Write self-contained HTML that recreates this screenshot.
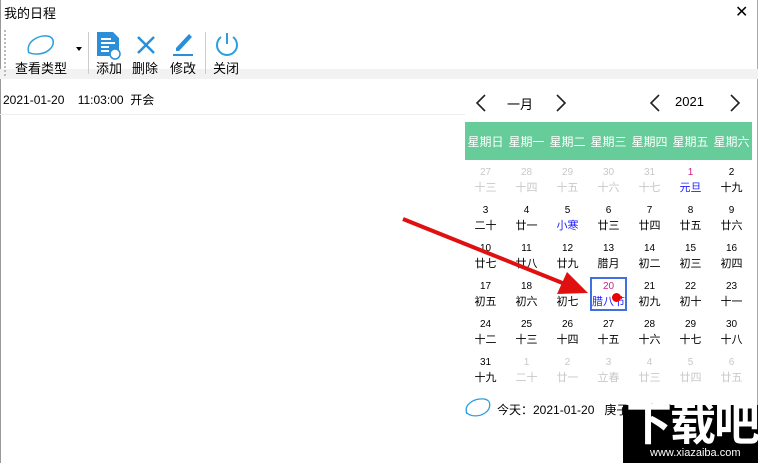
<!DOCTYPE html><html><head><meta charset="utf-8"><style>
*{margin:0;padding:0;box-sizing:border-box}
body{width:758px;height:463px;overflow:hidden;background:#fff;font-family:"Liberation Sans","Noto Sans CJK SC",sans-serif;position:relative;color:#000}
.a{position:absolute;white-space:nowrap}
.tb{font-size:13px}
.c{position:absolute;width:41px;text-align:center;font-size:10px;line-height:12px}
.c .l{font-size:11px;line-height:14px;margin-top:2px}
</style></head><body>
<div class="a" style="left:0;top:0;width:1px;height:463px;background:#999"></div>
<div class="a" style="left:757px;top:0;width:1px;height:463px;background:#aaa"></div>
<div class="a" style="left:4px;top:3px;font-size:13px">我的日程</div>
<div class="a" style="left:735px;top:2px;font-size:16px">✕</div>
<div class="a" style="left:0;top:69px;width:758px;height:10px;background:#f2f2f2"></div>
<div class="a" style="left:4px;top:30px;width:2px;height:46px;border-left:2px dotted #bbb"></div>
<svg class="a" style="left:25px;top:33px" width="32" height="24"><path d="M4 20 C0 10 12 2 22 3 C30 4 30 12 24 17 C18 22 8 22 3 19" fill="none" stroke="#2a9fe0" stroke-width="1.5"/></svg>
<div class="a tb" style="left:15px;top:58px">查看类型</div>
<div class="a" style="left:76px;top:47px;border:3px solid transparent;border-top:4px solid #000"></div>
<div class="a" style="left:88px;top:32px;width:1px;height:42px;background:#ccc"></div>
<svg class="a" style="left:95px;top:31px" width="28" height="30"><path d="M2 1h16l6 6v18H2z" fill="#2a8fd8"/><path d="M6 8h10M6 12h14M6 16h8M6 20h8" stroke="#fff" stroke-width="2"/><circle cx="20" cy="23" r="5" fill="#fff" stroke="#2a8fd8" stroke-width="1.5"/></svg>
<div class="a tb" style="left:96px;top:58px">添加</div>
<svg class="a" style="left:136px;top:35px" width="20" height="20"><path d="M2 2L18 18M18 2L2 18" stroke="#2a8fd8" stroke-width="2.5"/></svg>
<div class="a tb" style="left:132px;top:58px">删除</div>
<svg class="a" style="left:171px;top:31px" width="24" height="26"><path d="M5 17L18 3l3 3L8 20H5z" fill="#2a8fd8"/><path d="M2 24h20" stroke="#2a8fd8" stroke-width="2"/></svg>
<div class="a tb" style="left:170px;top:58px">修改</div>
<div class="a" style="left:205px;top:32px;width:1px;height:42px;background:#ccc"></div>
<svg class="a" style="left:213px;top:31px" width="28" height="28"><path d="M8 6A10 10 0 1 0 20 6" fill="none" stroke="#2a9fe0" stroke-width="2"/><path d="M14 2v11" stroke="#2a9fe0" stroke-width="2"/></svg>
<div class="a tb" style="left:213px;top:58px">关闭</div>
<div class="a" style="left:3px;top:91px;font-size:12px">2021-01-20&nbsp;&nbsp;&nbsp;&nbsp;11:03:00&nbsp;&nbsp;开会</div>
<div class="a" style="left:0;top:114px;width:465px;height:1px;background:#eee"></div>
<svg class="a" style="left:470px;top:90px" width="290" height="28" fill="none" stroke="#222" stroke-width="1.6"><path d="M15 5L7 13L15 21M87 5L95 13L87 21M189 5L181 13L189 21M261 5L269 13L261 21"/></svg>
<div class="a" style="left:507px;top:94px;font-size:13px">一月</div>
<div class="a" style="left:675px;top:94px;font-size:13px">2021</div>
<div class="a" style="left:465px;top:122px;width:287px;height:38px;background:#66cc99"></div>
<div id="hd"></div>
<div id="cal"></div>
<div class="a" style="left:590px;top:277px;width:37px;height:34px;border:2px solid #3f6fe0"></div>
<div class="a" style="left:612px;top:293px;width:9px;height:9px;border-radius:50%;background:#e00"></div>
<svg class="a" style="left:400px;top:210px" width="200" height="100"><path d="M3 9L165 74" stroke="#e01010" stroke-width="4"/><path d="M188 83L157 84L167 62z" fill="#e01010"/></svg>
<svg class="a" style="left:463px;top:396px" width="30" height="24"><path d="M4 18C0 8 12 2 21 3C29 4 28 13 22 17C16 21 7 21 3 16" fill="none" stroke="#2a9fe0" stroke-width="1.3"/></svg>
<div class="a" style="left:497px;top:401px;font-size:12px">今天：2021-01-20&nbsp;&nbsp;&nbsp;庚子(鼠)年腊月初八</div>
<div class="a" style="left:623px;top:405px;width:135px;height:58px;background:#000"></div>
<div class="a" style="left:626px;top:398px;font-size:46px;font-weight:bold;color:#fff;letter-spacing:-2px;line-height:52px">下载吧</div>
<div class="a" style="left:650px;top:447px;font-size:11px;color:#fff">www.xiazaiba.com</div>
<script>
var h=["星期日","星期一","星期二","星期三","星期四","星期五","星期六"],s="";
for(var i=0;i<7;i++)s+='<div class="a" style="left:'+(465+i*41)+'px;top:133px;width:41px;text-align:center;color:#fff;font-size:12px">'+h[i]+'</div>';
var d=[["27","十三",1],["28","十四",1],["29","十五",1],["30","十六",1],["31","十七",1],["1","元旦",2],["2","十九"],
["3","二十"],["4","廿一"],["5","小寒",3],["6","廿三"],["7","廿四"],["8","廿五"],["9","廿六"],
["10","廿七"],["11","廿八"],["12","廿九"],["13","腊月"],["14","初二"],["15","初三"],["16","初四"],
["17","初五"],["18","初六"],["19","初七"],["20","腊八节",4],["21","初九"],["22","初十"],["23","十一"],
["24","十二"],["25","十三"],["26","十四"],["27","十五"],["28","十六"],["29","十七"],["30","十八"],
["31","十九"],["1","二十",1],["2","廿一",1],["3","立春",1],["4","廿三",1],["5","廿四",1],["6","廿五",1]];
for(var k=0;k<42;k++){var r=Math.floor(k/7),c=k%7,t=d[k][2]||0;
var nc=t==1?'#c8c8c8':(t==2||t==4?'#d0208a':'#000'),lc=t==1?'#c8c8c8':(t>=2?'#2020ff':'#000');
s+='<div class="c" style="left:'+(465+c*41)+'px;top:'+(167+r*38)+'px"><div style="color:'+nc+'">'+d[k][0]+'</div><div class="l" style="color:'+lc+'">'+d[k][1]+'</div></div>';}
document.getElementById('cal').outerHTML=s;
</script>
</body></html>
